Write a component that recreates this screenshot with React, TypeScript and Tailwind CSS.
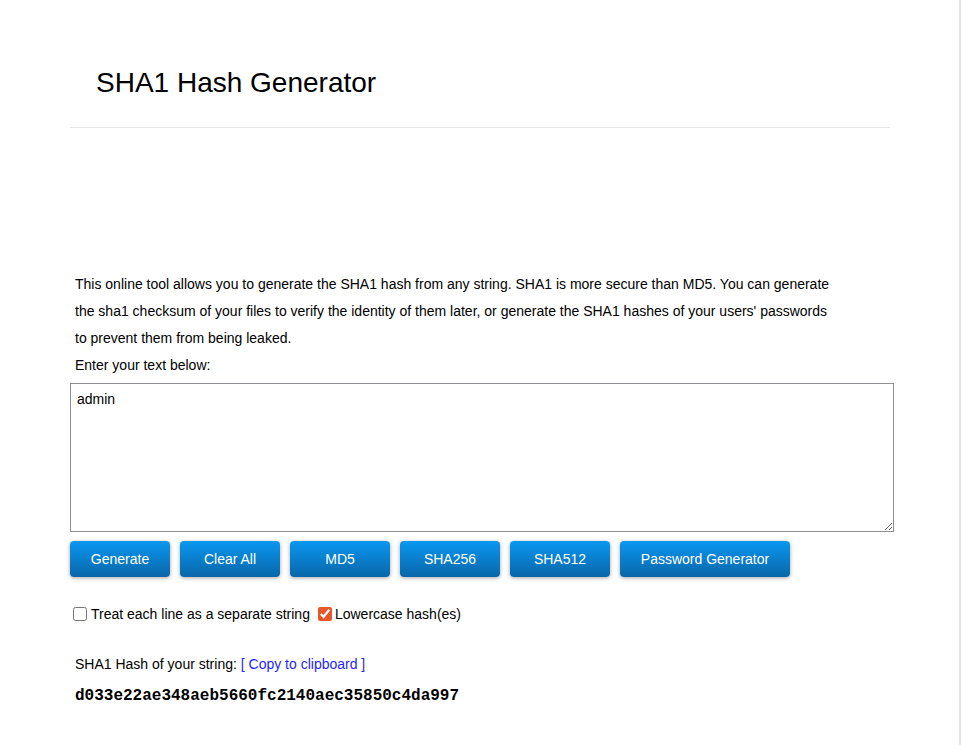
import { useState } from 'react'

const buttons = [
  { label: 'Generate', w: 'w-[100px]' },
  { label: 'Clear All', w: 'w-[100px]' },
  { label: 'MD5', w: 'w-[100px]' },
  { label: 'SHA256', w: 'w-[100px]' },
  { label: 'SHA512', w: 'w-[100px]' },
  { label: 'Password Generator', w: 'w-[170px]' },
]

export default function App() {
  const [text, setText] = useState('admin')
  const [separate, setSeparate] = useState(false)
  const [lower, setLower] = useState(true)

  return (
    <div className="min-h-[745px] w-full bg-white border-r-2 border-[#e2e2e2] font-['Liberation_Sans',Arial,sans-serif] text-[14px] text-black">
      <div className="ml-[70px] w-[824px]">
        <h1 className="pl-[26px] pt-[67px] text-[28px] leading-[32px] font-normal">SHA1 Hash Generator</h1>
        <div className="mt-[28px] h-px w-[820px] bg-[#e4e4e4]" />

        <p className="mt-[143px] pl-[5px] leading-[27px]">
          This online tool allows you to generate the SHA1 hash from any string. SHA1 is more secure than MD5. You can generate
          <br />
          the sha1 checksum of your files to verify the identity of them later, or generate the SHA1 hashes of your users' passwords
          <br />
          to prevent them from being leaked.
          <br />
          Enter your text below:
        </p>

        <textarea
          value={text}
          onChange={(e) => setText(e.target.value)}
          className="mt-[4px] block h-[149px] w-[824px] border border-[#8f8f94] px-[6px] py-[6px] text-[14px] leading-[18px] font-['Liberation_Sans',Arial,sans-serif] outline-none"
        />

        <div className="mt-[9px] flex gap-[10px]">
          {buttons.map((b) => (
            <button
              key={b.label}
              className={`${b.w} h-[36px] rounded-[4px] bg-gradient-to-b from-[#0a98f2] to-[#0866a8] text-white text-[14px] shadow-[0_1px_4px_rgba(0,0,0,0.35)]`}
            >
              {b.label}
            </button>
          ))}
        </div>

        <div className="mt-[27px] flex h-[20px] items-center pl-[3px] leading-[20px]">
          <label className="flex items-center">
            <input
              type="checkbox"
              checked={separate}
              onChange={() => setSeparate(!separate)}
              className="h-[14px] w-[14px] accent-[#e8572b]"
            />
            <span className="ml-[4px]">Treat each line as a separate string</span>
          </label>
          <label className="ml-[8px] flex items-center">
            <input
              type="checkbox"
              checked={lower}
              onChange={() => setLower(!lower)}
              className="h-[14px] w-[14px] accent-[#e8572b]"
            />
            <span className="ml-[3px]">Lowercase hash(es)</span>
          </label>
        </div>

        <div className="mt-[30px] pl-[5px] leading-[20px]">
          SHA1 Hash of your string: <a className="text-[#1f1fff] cursor-pointer">[ Copy to clipboard ]</a>
        </div>

        <div className="mt-[12px] pl-[5px] font-['Liberation_Mono','Courier_New',monospace] text-[16px] font-bold leading-[20px]">
          d033e22ae348aeb5660fc2140aec35850c4da997
        </div>
      </div>
    </div>
  )
}
